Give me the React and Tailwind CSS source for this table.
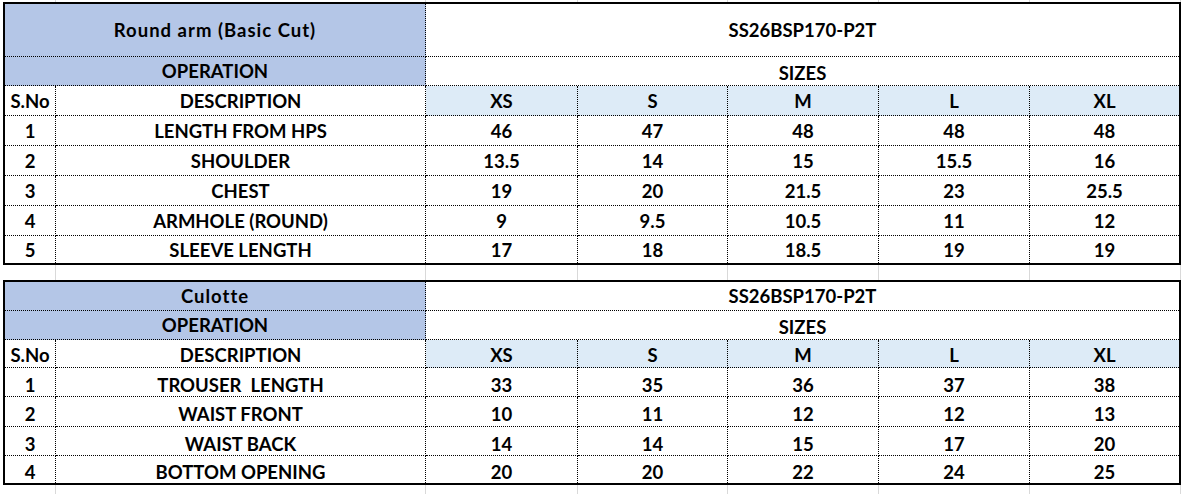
import React from 'react'

const COLS = 'grid grid-cols-[51px_370px_152px_150px_151px_151px_149px]'
const SIZES = ['XS', 'S', 'M', 'L', 'XL']

const top = {
  title: 'Round arm (Basic Cut)',
  code: 'SS26BSP170-P2T',
  heights: { title: 'h-[53px]', op: 'h-[29px]', head: 'h-[30px] pt-[2px]' },
  rows: [
    ['1', 'LENGTH FROM HPS', ['46', '47', '48', '48', '48']],
    ['2', 'SHOULDER', ['13.5', '14', '15', '15.5', '16']],
    ['3', 'CHEST', ['19', '20', '21.5', '23', '25.5']],
    ['4', 'ARMHOLE (ROUND)', ['9', '9.5', '10.5', '11', '12']],
    ['5', 'SLEEVE LENGTH', ['17', '18', '18.5', '19', '19']],
  ],
  rowH: ['h-[30px] pt-[2px]', 'h-[30px] pt-[2px]', 'h-[30px] pt-[2px]', 'h-[30px] pt-[2px]', 'h-[27px] pt-[2px]'],
}

const bottom = {
  title: 'Culotte',
  code: 'SS26BSP170-P2T',
  heights: { title: 'h-[29px]', op: 'h-[29px]', head: 'h-[28px] pt-[4px]' },
  rows: [
    ['1', 'TROUSER  LENGTH', ['33', '35', '36', '37', '38']],
    ['2', 'WAIST FRONT', ['10', '11', '12', '12', '13']],
    ['3', 'WAIST BACK', ['14', '14', '15', '17', '20']],
    ['4', 'BOTTOM OPENING', ['20', '20', '22', '24', '25']],
  ],
  rowH: ['h-[29px] pt-[6px]', 'h-[30px] pt-[5px]', 'h-[29px] pt-[6px]', 'h-[27px] pt-[6px]'],
}

function GridStrip({ h }) {
  const widths = ['w-[56px]', 'w-[370px]', 'w-[152px]', 'w-[150px]', 'w-[151px]', 'w-[151px]', 'w-[151px]']
  return (
    <div className={`flex ${h}`}>
      {widths.map((w, i) => (
        <div key={i} className={`${w} shrink-0 border-r border-[#d9d9d9]`} />
      ))}
    </div>
  )
}

function Cell({ children, className = '', last = false, bottomRow = false }) {
  return (
    <div
      className={`flex items-center justify-center whitespace-pre border-dotted border-black ${
        last ? '' : 'border-r'
      } ${bottomRow ? '' : 'border-b'} ${className}`}
    >
      {children}
    </div>
  )
}

function SizeTable({ data }) {
  const n = data.rows.length
  return (
    <div className="ml-[3px] w-[1178px] border-2 border-black">
      <div className={COLS}>
        <Cell className={`col-span-2 bg-[#b4c6e7] tracking-[1px] ${data.heights.title}`}>{data.title}</Cell>
        <Cell className={`col-span-5 ${data.heights.title}`} last>
          {data.code}
        </Cell>

        <Cell className={`col-span-2 bg-[#b4c6e7] ${data.heights.op}`}>OPERATION</Cell>
        <Cell className={`col-span-5 items-end pb-[3px] ${data.heights.op}`} last>
          SIZES
        </Cell>

        <Cell className={data.heights.head}>S.No</Cell>
        <Cell className={data.heights.head}>DESCRIPTION</Cell>
        {SIZES.map((s, i) => (
          <Cell key={s} className={`bg-[#ddebf7] ${data.heights.head}`} last={i === 4}>
            {s}
          </Cell>
        ))}

        {data.rows.map(([no, desc, vals], r) => (
          <React.Fragment key={no}>
            <Cell className={data.rowH[r]} bottomRow={r === n - 1}>
              {no}
            </Cell>
            <Cell className={data.rowH[r]} bottomRow={r === n - 1}>
              {desc}
            </Cell>
            {vals.map((v, i) => (
              <Cell key={i} className={data.rowH[r]} last={i === 4} bottomRow={r === n - 1}>
                {v}
              </Cell>
            ))}
          </React.Fragment>
        ))}
      </div>
    </div>
  )
}

export default function App() {
  return (
    <div className="h-[494px] w-[1184px] overflow-hidden bg-white font-['Lato',sans-serif] text-[18.5px] font-bold leading-none text-black">
      <GridStrip h="h-[2px]" />
      <SizeTable data={top} />
      <GridStrip h="h-[15px]" />
      <SizeTable data={bottom} />
      <GridStrip h="h-[10px]" />
    </div>
  )
}
